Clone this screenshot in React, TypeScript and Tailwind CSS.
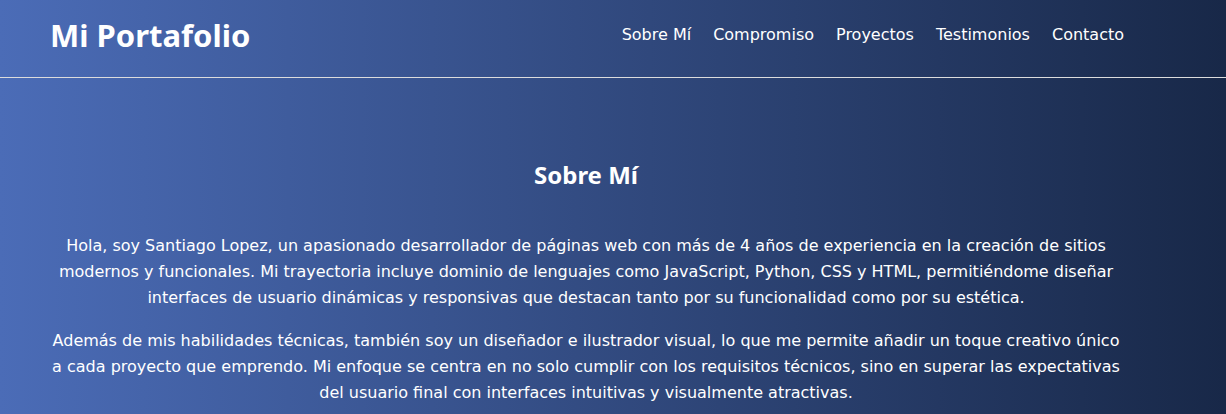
import React from "react";

const navLinks = ["Sobre Mí", "Compromiso", "Proyectos", "Testimonios", "Contacto"];

const App: React.FC = () => {
  return (
    <div className="min-h-screen bg-[linear-gradient(to_right,#4b6cb7,#182848)] text-white font-['DejaVu_Sans',sans-serif]">
      {/* Header */}
      <header className="h-[69px] pb-2 box-content border-b border-[#dcdcdc] flex items-center justify-between pl-[50px] pr-[102px]">
        <h1 className="font-['Noto_Sans',sans-serif] font-bold text-[31px] leading-[40px]">
          Mi Portafolio
        </h1>
        <nav>
          <ul className="flex gap-[22px] text-base">
            {navLinks.map((link) => (
              <li key={link}>
                <a href={`#${link}`} className="text-white">
                  {link}
                </a>
              </li>
            ))}
          </ul>
        </nav>
      </header>

      {/* Sobre Mí */}
      <section id="sobre-mi" className="pl-[50px] pr-[104px] text-center">
        <h2 className="font-['Noto_Sans',sans-serif] font-bold text-2xl leading-8 mt-[81px] mb-[42px]">
          Sobre Mí
        </h2>
        <p className="text-base leading-[26px] mb-[17px]">
          Hola, soy Santiago Lopez, un apasionado desarrollador de páginas web con más de 4 años de experiencia en la creación de sitios
          <br />
          modernos y funcionales. Mi trayectoria incluye dominio de lenguajes como JavaScript, Python, CSS y HTML, permitiéndome diseñar
          <br />
          interfaces de usuario dinámicas y responsivas que destacan tanto por su funcionalidad como por su estética.
        </p>
        <p className="text-base leading-[26px]">
          Además de mis habilidades técnicas, también soy un diseñador e ilustrador visual, lo que me permite añadir un toque creativo único
          <br />
          a cada proyecto que emprendo. Mi enfoque se centra en no solo cumplir con los requisitos técnicos, sino en superar las expectativas
          <br />
          del usuario final con interfaces intuitivas y visualmente atractivas.
        </p>
      </section>
    </div>
  );
};

export default App;
